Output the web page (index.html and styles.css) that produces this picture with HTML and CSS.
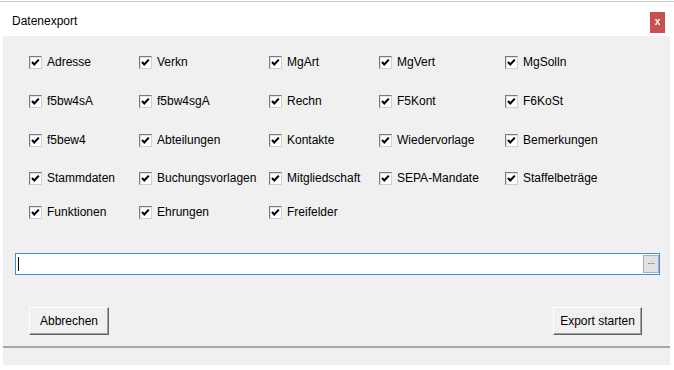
FILE: index.html
```
<!DOCTYPE html>
<html lang="de">
<head>
	<meta charset="UTF-8">
	<title>Datenexport</title>
	<link rel="stylesheet" href="styles.css">
</head>
<body>

	<div class="page">
		<div class="dialog">
			<div class="titlebar">
				<span class="title">Datenexport</span>
				<span class="close">x</span>
			</div>

			<div class="content">
				<ul class="options">
					<li><span class="box"><svg width="11" height="11" viewBox="0 0 11 11"><polyline points="2,5 4.3,7.5 8.8,2.6" /></svg></span>Adresse</li>
					<li><span class="box"><svg width="11" height="11" viewBox="0 0 11 11"><polyline points="2,5 4.3,7.5 8.8,2.6" /></svg></span>Verkn</li>
					<li><span class="box"><svg width="11" height="11" viewBox="0 0 11 11"><polyline points="2,5 4.3,7.5 8.8,2.6" /></svg></span>MgArt</li>
					<li><span class="box"><svg width="11" height="11" viewBox="0 0 11 11"><polyline points="2,5 4.3,7.5 8.8,2.6" /></svg></span>MgVert</li>
					<li><span class="box"><svg width="11" height="11" viewBox="0 0 11 11"><polyline points="2,5 4.3,7.5 8.8,2.6" /></svg></span>MgSolln</li>

					<li><span class="box"><svg width="11" height="11" viewBox="0 0 11 11"><polyline points="2,5 4.3,7.5 8.8,2.6" /></svg></span>f5bw4sA</li>
					<li><span class="box"><svg width="11" height="11" viewBox="0 0 11 11"><polyline points="2,5 4.3,7.5 8.8,2.6" /></svg></span>f5bw4sgA</li>
					<li><span class="box"><svg width="11" height="11" viewBox="0 0 11 11"><polyline points="2,5 4.3,7.5 8.8,2.6" /></svg></span>Rechn</li>
					<li><span class="box"><svg width="11" height="11" viewBox="0 0 11 11"><polyline points="2,5 4.3,7.5 8.8,2.6" /></svg></span>F5Kont</li>
					<li><span class="box"><svg width="11" height="11" viewBox="0 0 11 11"><polyline points="2,5 4.3,7.5 8.8,2.6" /></svg></span>F6KoSt</li>

					<li><span class="box"><svg width="11" height="11" viewBox="0 0 11 11"><polyline points="2,5 4.3,7.5 8.8,2.6" /></svg></span>f5bew4</li>
					<li><span class="box"><svg width="11" height="11" viewBox="0 0 11 11"><polyline points="2,5 4.3,7.5 8.8,2.6" /></svg></span>Abteilungen</li>
					<li><span class="box"><svg width="11" height="11" viewBox="0 0 11 11"><polyline points="2,5 4.3,7.5 8.8,2.6" /></svg></span>Kontakte</li>
					<li><span class="box"><svg width="11" height="11" viewBox="0 0 11 11"><polyline points="2,5 4.3,7.5 8.8,2.6" /></svg></span>Wiedervorlage</li>
					<li><span class="box"><svg width="11" height="11" viewBox="0 0 11 11"><polyline points="2,5 4.3,7.5 8.8,2.6" /></svg></span>Bemerkungen</li>

					<li><span class="box"><svg width="11" height="11" viewBox="0 0 11 11"><polyline points="2,5 4.3,7.5 8.8,2.6" /></svg></span>Stammdaten</li>
					<li><span class="box"><svg width="11" height="11" viewBox="0 0 11 11"><polyline points="2,5 4.3,7.5 8.8,2.6" /></svg></span>Buchungsvorlagen</li>
					<li><span class="box"><svg width="11" height="11" viewBox="0 0 11 11"><polyline points="2,5 4.3,7.5 8.8,2.6" /></svg></span>Mitgliedschaft</li>
					<li><span class="box"><svg width="11" height="11" viewBox="0 0 11 11"><polyline points="2,5 4.3,7.5 8.8,2.6" /></svg></span>SEPA-Mandate</li>
					<li><span class="box"><svg width="11" height="11" viewBox="0 0 11 11"><polyline points="2,5 4.3,7.5 8.8,2.6" /></svg></span>Staffelbeträge</li>

					<li><span class="box"><svg width="11" height="11" viewBox="0 0 11 11"><polyline points="2,5 4.3,7.5 8.8,2.6" /></svg></span>Funktionen</li>
					<li><span class="box"><svg width="11" height="11" viewBox="0 0 11 11"><polyline points="2,5 4.3,7.5 8.8,2.6" /></svg></span>Ehrungen</li>
					<li><span class="box"><svg width="11" height="11" viewBox="0 0 11 11"><polyline points="2,5 4.3,7.5 8.8,2.6" /></svg></span>Freifelder</li>
				</ul>

				<div class="path">
					<span class="caret"></span>
					<span class="browse">...</span>
				</div>

				<div class="actions">
					<button class="btn btn-cancel">Abbrechen</button>
					<button class="btn btn-start">Export starten</button>
				</div>
			</div><!-- .content -->

			<div class="statusbar"></div>
		</div><!-- .dialog -->
	</div>

</body>
</html>
```

FILE: styles.css
```
body{ margin: 0; background: #fff; font-family: "Liberation Sans", Arial, sans-serif; font-size: 12px; color: #000;}
.page{ padding-top: 5px; border-top: 1px solid #fff; box-shadow: inset 0 3px 0 -2px #c8c8c8; height: 364px; overflow: hidden;}
.dialog{ margin-left: 3px; width: 667px;}

.titlebar{ display: flex; justify-content: space-between; align-items: flex-start; height: 30px; background: #fff;}
.title{ padding: 8px 0 0 9px; line-height: 15px;}
.close{ margin: 6px 5px 0 0; width: 15px; height: 21px; line-height: 20px; text-align: center; color: #fff; font-size: 10px; font-weight: bold; background: #c75050;}

.content{ padding-top: 20px; height: 290px; background: #f0f0f0;}

.options{ display: grid; grid-template-columns: 110px 130px 110px 126px 1fr; grid-template-rows: 39px 39px 38px 34px 13px; margin: 0 0 0 26px; padding: 0; list-style: none;}
.options li{ display: flex; align-items: center; height: 13px; line-height: 13px; white-space: nowrap;}
.box{ display: flex; align-items: center; justify-content: center; margin-right: 5px; width: 11px; height: 11px; background: #fff; border: 1px solid; border-color: #7a7a7a #d0d0d0 #d0d0d0 #7a7a7a; box-shadow: inset 1px 1px 0 #e0e0e0;}
.box polyline{ fill: none; stroke: #000; stroke-width: 2.1;}

.path{ display: flex; justify-content: space-between; align-items: center; margin: 34px 0 0 12px; padding: 0 0 0 2px; width: 641px; height: 20px; background: #fff; border: 1px solid #3a8ee6;}
.caret{ width: 1px; height: 14px; background: #000;}
.browse{ width: 14px; height: 16px; line-height: 11px; text-align: center; font-size: 9px; color: #333; background: #e1e1e1; border: 1px solid #adadad;}

.actions{ display: flex; justify-content: space-between; margin: 32px 28px 0 26px;}
.btn{ height: 28px; padding: 0; font-family: inherit; font-size: 12px; color: #000; background: #f0f0f0; border: 1px solid; border-color: #fff #646464 #646464 #fff; box-shadow: inset -1px -1px 0 #a0a0a0;}
.btn-cancel{ width: 80px;}
.btn-start{ width: 89px;}

.statusbar{ height: 17px; background: #f0f0f0; border-top: 2px solid #a8a8a8;}
```
